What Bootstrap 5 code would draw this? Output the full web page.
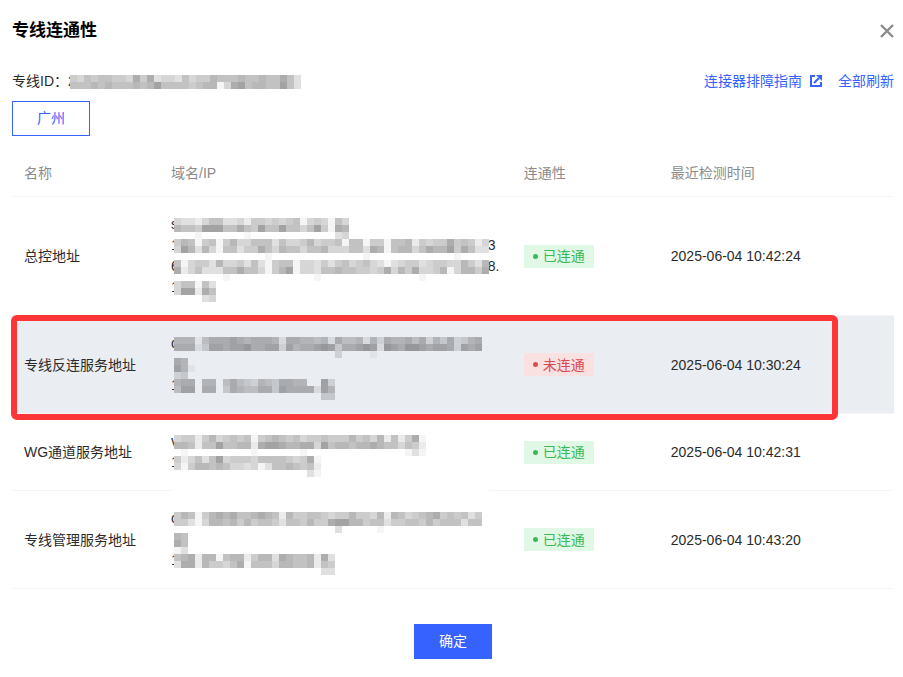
<!DOCTYPE html>
<html lang="zh-CN">
<head>
<meta charset="utf-8">
<meta name="viewport" content="width=device-width, initial-scale=1">
<title>专线连通性</title>
<link href="https://cdn.jsdelivr.net/npm/bootstrap@5.3.0/dist/css/bootstrap.min.css" rel="stylesheet">
<style>
  :root { --brand: #3662ff; }
  body { font: 14px/20px "Liberation Sans", "Noto Sans CJK SC", sans-serif; color: #2b2b2b; background: #fff; }
  .dialog-box { padding: 19px 9px 18px 12px; }
  .dialog-title { font-size: 17px; line-height: 24px; font-weight: 700; color: #000; }
  .close-x { color: #8a8a8a; line-height: 0; }
  .id-row { margin-top: 28px; margin-bottom: 10px; }
  .action-link { color: var(--brand); text-decoration: none; }
  .flat-btn { --bs-btn-border-radius: 0; --bs-btn-font-size: 14px; width: 78px; height: 35px; padding: 0; }
  .region-btn { --bs-btn-color: var(--brand); --bs-btn-border-color: var(--brand); }
  .ok-btn { --bs-btn-bg: var(--brand); --bs-btn-border-color: var(--brand); --bs-btn-color: #fff; margin-top: 35px; }
  .status-table { --row-bg: #fff; margin-top: 14px; table-layout: fixed; color: inherit; border-color: #f5f5f6; }
  .status-table > thead > tr > th { padding: 13px 12px; font-weight: 400; color: #8b8b8b; }
  .status-table > tbody > tr > td { padding: 17px 12px; color: inherit; }
  .status-table > tbody > tr.row-alert { --row-bg: #eaedf2; }
  .status-table > tbody > tr.row-alert > td { background: var(--row-bg); }
  .col-name, .col-state { width: 16.667%; }
  .col-host { width: 40%; }
  .host { line-height: 21px; }
  .host-line { height: 21px; }
  .host-end { width: 12px; }
  .mosaic { position: absolute; left: 3px; top: 4px; z-index: 1; background: var(--row-bg, #fff); }
  .id-mosaic { top: 4px; left: 2px; }
  .state { gap: 5px; height: 23px; padding: 0 9px; color: #3cb855; background: #e0f8e5; }
  .state::before { content: ""; width: 5px; height: 5px; border-radius: 50%; background: currentColor; }
  .state-bad { color: #dc4a50; background: #f9e0e1; }
  .marker { position: absolute; z-index: 2; left: -1px; top: -1px; bottom: -6px; width: 93.8%; border: 6px solid #fc3636; border-radius: 6px; pointer-events: none; }
</style>
<script src="https://cdn.jsdelivr.net/npm/bootstrap@5.3.0/dist/js/bootstrap.bundle.min.js"></script>
</head>
<body>
<main class="dialog-box">
  <header class="d-flex justify-content-between align-items-center">
    <h1 class="dialog-title m-0">专线连通性</h1>
    <button type="button" class="close-x border-0 bg-transparent p-0" aria-label="关闭">
      <svg width="14" height="14" viewBox="0 0 14 14" fill="none" stroke="currentColor" stroke-width="2.4"><path d="M1 1l12 12M13 1L1 13"/></svg>
    </button>
  </header>

  <div class="id-row d-flex justify-content-between">
    <div class="d-flex"><span>专线ID：</span><span class="position-relative">2<svg class="mosaic id-mosaic" data-mosaic="id" aria-hidden="true"></svg></span></div>
    <nav class="d-flex" aria-label="操作">
      <a class="action-link d-flex align-items-center me-3" href="#guide">连接器排障指南
        <svg class="ms-2" width="12" height="12" viewBox="0 0 12 12" fill="none" stroke="currentColor" stroke-width="2"><path d="M5 1H1v10h10V7M4 8l5-5"/><path d="M6 0h6v6z" fill="currentColor" stroke="none"/></svg></a>
      <a class="action-link" href="#refresh">全部刷新</a>
    </nav>
  </div>

  <button type="button" class="btn flat-btn region-btn d-block">广州</button>

  <table class="table status-table align-middle mb-0">
    <thead>
      <tr><th class="col-name" scope="col">名称</th><th class="col-host" scope="col">域名/IP</th><th class="col-state" scope="col">连通性</th><th scope="col">最近检测时间</th></tr>
    </thead>
    <tbody>
      <tr>
        <td>总控地址</td>
        <td><div class="host position-relative">
          <div class="host-line">s</div>
          <div class="host-line d-flex justify-content-between"><span>1</span><span class="host-end">3</span></div>
          <div class="host-line d-flex justify-content-between"><span>6</span><span class="host-end">8.</span></div>
          <div class="host-line">1</div>
          <svg class="mosaic" data-mosaic="control" aria-hidden="true"></svg></div></td>
        <td><span class="state d-inline-flex align-items-center align-middle">已连通</span></td>
        <td>2025-06-04 10:42:24</td>
      </tr>
      <tr class="row-alert position-relative">
        <td>专线反连服务地址<div class="marker" aria-hidden="true"></div></td>
        <td><div class="host position-relative">
          <div class="host-line">c</div><div class="host-line"></div><div class="host-line">1</div>
          <svg class="mosaic" data-mosaic="reverse" aria-hidden="true"></svg></div></td>
        <td><span class="state state-bad d-inline-flex align-items-center align-middle">未连通</span></td>
        <td>2025-06-04 10:30:24</td>
      </tr>
      <tr>
        <td>WG通道服务地址</td>
        <td><div class="host position-relative">
          <div class="host-line">v</div><div class="host-line">1</div>
          <svg class="mosaic" data-mosaic="wg" aria-hidden="true"></svg></div></td>
        <td><span class="state d-inline-flex align-items-center align-middle">已连通</span></td>
        <td>2025-06-04 10:42:31</td>
      </tr>
      <tr>
        <td>专线管理服务地址</td>
        <td><div class="host position-relative">
          <div class="host-line">c</div><div class="host-line"></div><div class="host-line">1</div>
          <svg class="mosaic" data-mosaic="manage" aria-hidden="true"></svg></div></td>
        <td><span class="state d-inline-flex align-items-center align-middle">已连通</span></td>
        <td>2025-06-04 10:43:20</td>
      </tr>
    </tbody>
  </table>

  <div class="text-center"><button type="button" class="btn flat-btn ok-btn">确定</button></div>
</main>
<script>
  // Masked values: each digit is the darkness of one 7px block, 0 is empty.
  const masks = {
    id: ["546566554858344364557666766766863", "666767666767966665677148967766963"],
    control: [
      "4332466334255454561454164", "7665999668659669664695187", "0001000000100000000000034",
      "576156157446663644574556166155166725455856524", "497374166355864766466744466387167746877958633", "0000000000000100000000000001000000000000100",
      "614553744536315661443535645643134553455447537", "824633366866415791443667665545847584457147758", "000000010000000000001000000000000001",
      "466163", "499286", "000034"],
    reverse: [
      "66615777876777627766562755626376675736473467", "77724887889778838677898477898298799878873878", "00000000000000000000000300001",
      "76", "861", "34",
      "67706605754365477660083", "58807704765577487777286", "00000000000000000000044"],
    wg: [
      "455257456561567656455655575647262581", "776266966772899877884967767787664652", "010000000001000000100000000000000131",
      "524636945554666654581", "415776764434136676562", "000000000000000000031",
      "0", "0"],
    manage: [
      "57615787866787627556654557554727645678565635", "55314776757566536657558997756635566575666366", "00000000000000000000000300000100",
      "76", "86", "13",
      "67827716772577387667283", "38827554681666477667265", "00000000000000000000033"]
  };
  const size = 7;
  document.querySelectorAll("[data-mosaic]").forEach(svg => {
    const rows = masks[svg.dataset.mosaic];
    const cols = svg.dataset.mosaic === "id" ? 33 : 45;
    svg.setAttribute("width", cols * size);
    svg.setAttribute("height", rows.length * size);
    svg.setAttribute("shape-rendering", "crispEdges");
    svg.innerHTML = rows.map((row, y) => [...row].map((d, x) => d === "0" ? "" :
      `<rect x="${x * size}" y="${y * size}" width="${size}" height="${size}" fill="#000" fill-opacity="${d * 4}%"/>`).join("")).join("");
  });
</script>
</body>
</html>
